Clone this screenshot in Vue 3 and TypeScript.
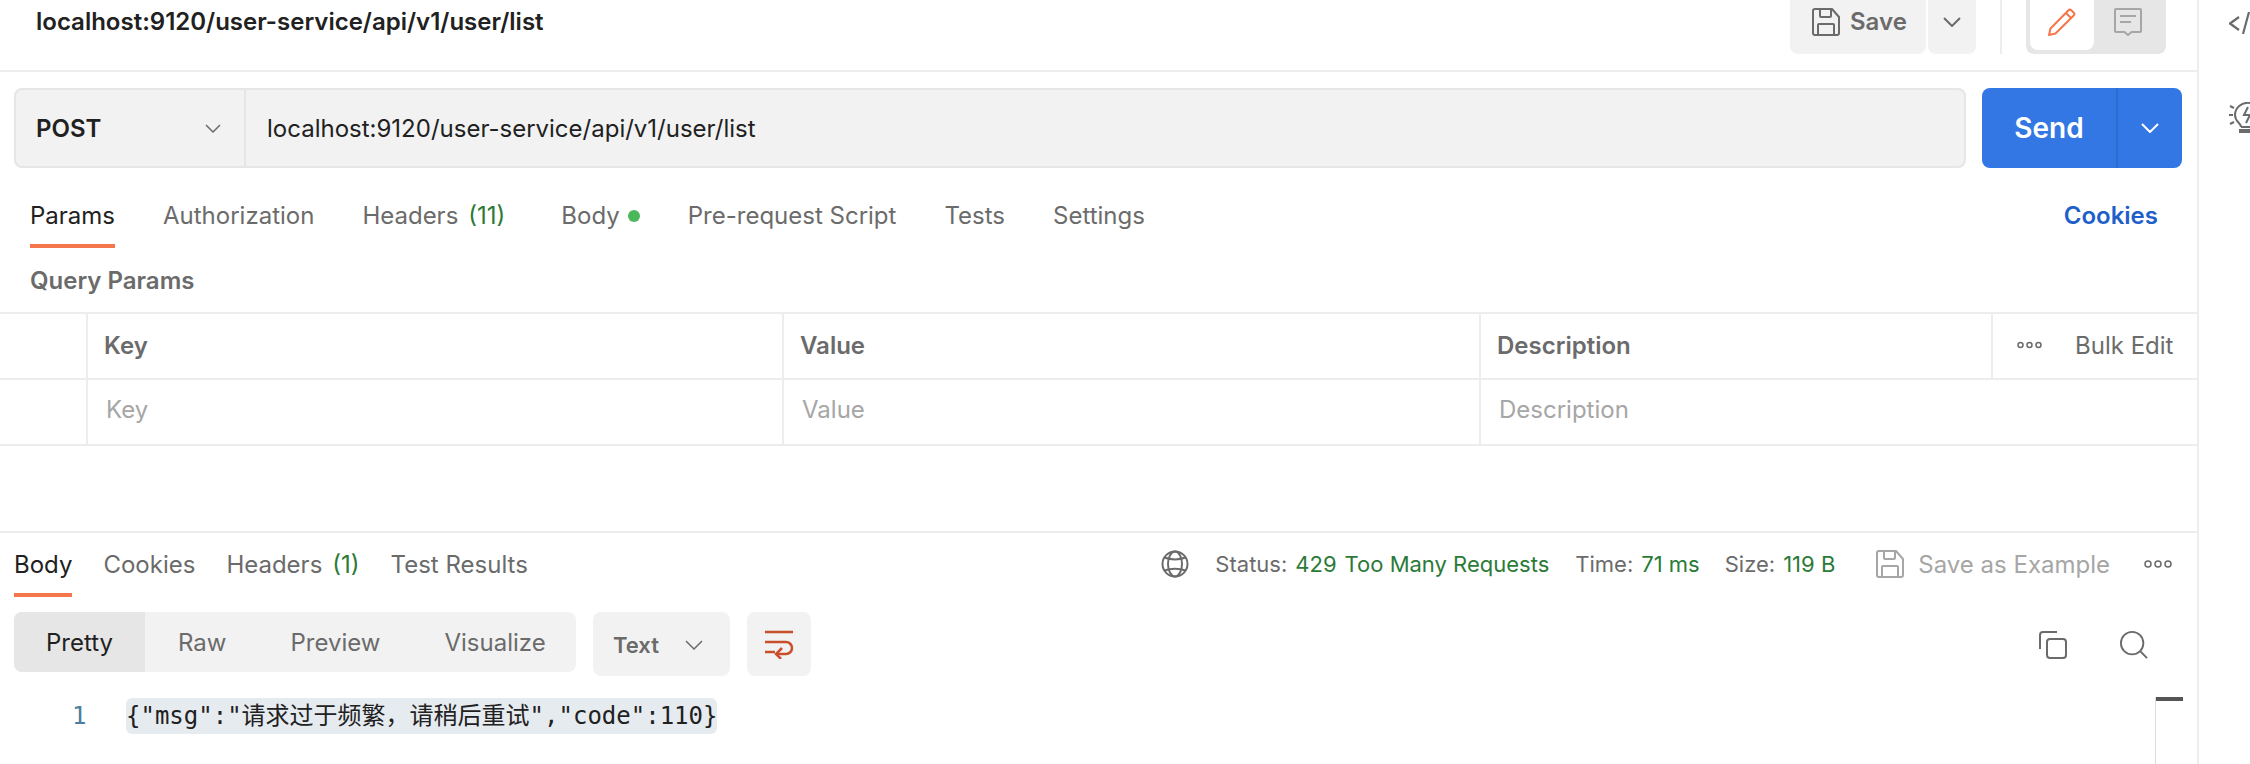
<script setup lang="ts">
const tabs: { label: string; count?: string; dot?: boolean; active?: boolean; cls: string }[] = [
  { label: 'Params', active: true, cls: 't-params' },
  { label: 'Authorization', cls: 't-auth' },
  { label: 'Headers', count: '(11)', cls: 't-head' },
  { label: 'Body', dot: true, cls: 't-body' },
  { label: 'Pre-request Script', cls: 't-pre' },
  { label: 'Tests', cls: 't-tests' },
  { label: 'Settings', cls: 't-set' },
]
const resTabs: { label: string; count?: string; active?: boolean }[] = [
  { label: 'Body', active: true },
  { label: 'Cookies' },
  { label: 'Headers', count: '(1)' },
  { label: 'Test Results' },
]
const views = ['Raw', 'Preview', 'Visualize']
</script>

<template>
  <div class="app">
    <main class="main">
      <header class="top">
        <h1 class="title">localhost:9120/user-service/api/v1/user/list</h1>
        <div class="save">
          <svg class="ic28" viewBox="0 0 28 28" fill="none" stroke="#6b6b6b" stroke-width="2">
            <path d="M1 3a2 2 0 0 1 2-2h17l7 8v16a2 2 0 0 1-2 2H3a2 2 0 0 1-2-2z" stroke-linejoin="round" />
            <path d="M8 1v7a1 1 0 0 0 1 1h9a1 1 0 0 0 1-1V1M6 27V17a1 1 0 0 1 1-1h14a1 1 0 0 1 1 1v10" />
          </svg>
          <span>Save</span>
        </div>
        <div class="save-more">
          <svg width="18" height="10" viewBox="0 0 18 10" fill="none" stroke="#6b6b6b" stroke-width="2"><path d="M1 1l8 8 8-8" /></svg>
        </div>
        <div class="vsep"></div>
        <div class="toggle">
          <div class="toggle-on">
            <svg class="ic28" viewBox="0 0 28 28" fill="none" stroke="#f4764a" stroke-width="2" stroke-linejoin="round">
              <path d="M1 27l1.500-6.500L20.500 2.300a2 2 0 0 1 2.800 0l2.400 2.400a2 2 0 0 1 0 2.800L7.500 25.500z" />
              <path d="M18 5l5 5" />
            </svg>
          </div>
          <div class="toggle-off">
            <svg class="ic28" viewBox="0 0 28 28" fill="none" stroke="#a6a6a6" stroke-width="2">
              <path d="M2 1h24a1 1 0 0 1 1 1v21a1 1 0 0 1-1 1h-8.500L14 27l-3.500-3H2a1 1 0 0 1-1-1V2a1 1 0 0 1 1-1z" stroke-linejoin="round" />
              <path d="M6 8h16M6 14h11" />
            </svg>
          </div>
        </div>
      </header>

      <section class="req">
        <div class="urlbox">
          <div class="method">
            <span>POST</span>
            <svg width="16" height="9" viewBox="0 0 16 9" fill="none" stroke="#6b6b6b" stroke-width="1.500"><path d="M1 1l7 7 7-7" /></svg>
          </div>
          <div class="url">localhost:9120/user-service/api/v1/user/list</div>
        </div>
        <div class="send">
          <span class="send-l">Send</span>
          <span class="send-r">
            <svg width="18" height="10" viewBox="0 0 18 10" fill="none" stroke="#fff" stroke-width="2"><path d="M1 1l8 8 8-8" /></svg>
          </span>
        </div>
      </section>

      <nav class="tabs">
        <div v-for="t in tabs" :key="t.label" class="tab" :class="[t.cls, { active: t.active }]">
          {{ t.label }}<span v-if="t.count" class="count">{{ t.count }}</span><i v-if="t.dot" class="dot"></i>
        </div>
        <div class="cookies">Cookies</div>
      </nav>

      <div class="qp">Query Params</div>

      <div class="table">
        <div class="cell"></div>
        <div class="cell th">Key</div>
        <div class="cell th">Value</div>
        <div class="cell th">Description</div>
        <div class="cell actions">
          <svg width="25" height="8" viewBox="0 0 25 8" fill="none" stroke="#6b6b6b" stroke-width="1.500"><circle cx="3.500" cy="4" r="2.500" /><circle cx="12.500" cy="4" r="2.500" /><circle cx="21.500" cy="4" r="2.500" /></svg>
          <span>Bulk Edit</span>
        </div>
        <div class="cell"></div>
        <div class="cell ph">Key</div>
        <div class="cell ph">Value</div>
        <div class="cell ph wide">Description</div>
      </div>

      <section class="res">
        <div class="res-top">
          <div class="res-tabs">
            <div v-for="t in resTabs" :key="t.label" class="rtab" :class="{ active: t.active }">
              {{ t.label }}<span v-if="t.count" class="count">{{ t.count }}</span>
            </div>
          </div>
          <div class="status">
            <svg width="28" height="28" viewBox="0 0 28 28" fill="none" stroke="#6b6b6b" stroke-width="2">
              <circle cx="14" cy="14" r="12.500" />
              <ellipse cx="14" cy="14" rx="7" ry="12.500" />
              <path d="M3.500 7.500c6 2.500 15 2.500 21 0M3.500 20.500c6-2.500 15-2.500 21 0" />
            </svg>
            <span class="st st-a">Status:<b>429</b><b class="tmr">Too Many Requests</b></span>
            <span class="st st-b">Time:<b>71 ms</b></span>
            <span class="st st-c">Size:<b>119 B</b></span>
            <svg class="ic28 st-save" viewBox="0 0 28 28" fill="none" stroke="#a6a6a6" stroke-width="2">
              <path d="M1 3a2 2 0 0 1 2-2h17l7 8v16a2 2 0 0 1-2 2H3a2 2 0 0 1-2-2z" stroke-linejoin="round" />
              <path d="M8 1v7a1 1 0 0 0 1 1h9a1 1 0 0 0 1-1V1M6 27V17a1 1 0 0 1 1-1h14a1 1 0 0 1 1 1v10" />
            </svg>
            <span class="st-ex">Save as Example</span>
            <svg class="st-dots" width="28" height="8" viewBox="0 0 28 8" fill="none" stroke="#6b6b6b" stroke-width="1.500"><circle cx="4" cy="4" r="3" /><circle cx="14" cy="4" r="3" /><circle cx="24" cy="4" r="3" /></svg>
          </div>
        </div>

        <div class="toolbar">
          <div class="views">
            <div class="view on">Pretty</div>
            <div v-for="v in views" :key="v" class="view" :class="'v-' + v">{{ v }}</div>
          </div>
          <div class="fmt">
            <span>Text</span>
            <svg width="18" height="10" viewBox="0 0 18 10" fill="none" stroke="#6b6b6b" stroke-width="1.500"><path d="M1 1l8 8 8-8" /></svg>
          </div>
          <div class="wrap">
            <svg width="30" height="30" viewBox="0 0 30 30" fill="none" stroke="#c94f2c" stroke-width="2.500">
              <path d="M1 3h28M1 13h21a5.500 5.500 0 0 1 0 12h-9M1 23h10" />
              <path d="M18 19l-6 6 5 5" />
            </svg>
          </div>
          <div class="tools">
            <svg class="ic28" viewBox="0 0 28 28" fill="none" stroke="#6b6b6b" stroke-width="2">
              <path d="M18 1H4a3 3 0 0 0-3 3v14" />
              <rect x="8" y="8" width="19" height="19" rx="3" />
            </svg>
            <svg class="ic28" viewBox="0 0 30 30" fill="none" stroke="#6b6b6b" stroke-width="2">
              <circle cx="13" cy="13" r="12" />
              <path d="M22 22l7 7" />
            </svg>
          </div>
        </div>

        <div class="code">
          <span class="ln">1</span>
          <span class="hl">{"msg":"请求过于频繁，请稍后重试","code":110}</span>
        </div>
        <div class="scroll"><i></i></div>
      </section>
    </main>

    <aside class="rail">
      <svg width="21" height="22" viewBox="0 0 21 22" fill="none" stroke="#6b6b6b" stroke-width="2.200">
        <path d="M10 5L1 11.500 10 18M20 0l-6 22" />
      </svg>
      <svg class="bulb" width="21" height="31" viewBox="0 0 21 31" fill="none" stroke="#6b6b6b" stroke-width="2">
        <path d="M12 25c0-4-6-5-6-12A13 12 0 0 1 21 1" />
        <path d="M12 25h9" />
        <path d="M19 5l-4 8h6l-4 8" />
        <path d="M1 4l4 2M0 13h4M1 22l4-2" />
        <path d="M10 29h11" stroke-width="4" />
      </svg>
    </aside>
  </div>
</template>

<style>
html, body { margin: 0; background: #fff; }
</style>

<style scoped>
.app {
  width: 2250px;
  height: 764px;
  overflow: hidden;
  display: flex;
  font-family: Inter, "Noto Sans", sans-serif;
  color: #6b6b6b;
  background: #fff;
}
.main {
  width: 2199px;
  flex: none;
  box-sizing: border-box;
  border-right: 2px solid #ededed;
}
.ic28 { width: 28px; height: 28px; flex: none; }

.top {
  height: 72px;
  box-sizing: border-box;
  border-bottom: 2px solid #ededed;
  display: flex;
  align-items: flex-start;
  padding-right: 31px;
}
.title {
  margin: 0 auto 0 36px;
  font-size: 24px;
  line-height: 44px;
  font-weight: 600;
  color: #212121;
}
.save {
  width: 136px;
  height: 54px;
  box-sizing: border-box;
  padding: 8px 0 0 22px;
  display: flex;
  gap: 10px;
  background: #f2f2f2;
  border-radius: 0 0 8px 8px;
  font-size: 24px;
  font-weight: 600;
  line-height: 28px;
}
.save-more {
  width: 48px;
  height: 54px;
  margin-left: 2px;
  background: #f2f2f2;
  border-radius: 0 0 8px 8px;
  display: flex;
  justify-content: center;
  padding-top: 17px;
  box-sizing: border-box;
}
.vsep { width: 2px; height: 54px; margin: 0 24px; background: #ededed; }
.toggle {
  width: 140px;
  height: 54px;
  box-sizing: border-box;
  padding: 0 4px 4px;
  background: #e6e6e6;
  border-radius: 0 0 8px 8px;
  display: flex;
}
.toggle-on {
  width: 64px;
  background: #fff;
  border-radius: 0 0 8px 8px;
  padding: 8px 0 0 18px;
  box-sizing: border-box;
}
.toggle-off { padding: 8px 0 0 20px; }

.req { display: flex; gap: 16px; padding: 16px 15px 0 14px; }
.urlbox {
  flex: 1;
  height: 80px;
  box-sizing: border-box;
  border: 2px solid #e6e6e6;
  border-radius: 8px;
  background: #f2f2f2;
  display: flex;
  align-items: center;
}
.method {
  width: 230px;
  height: 100%;
  flex: none;
  box-sizing: border-box;
  border-right: 2px solid #e6e6e6;
  padding: 0 23px 0 20px;
  display: flex;
  align-items: center;
  justify-content: space-between;
  font-size: 24px;
  font-weight: 600;
  color: #212121;
}
.url { padding-left: 21px; font-size: 24px; color: #212121; }
.send {
  width: 200px;
  height: 80px;
  background: #3377e4;
  border-radius: 8px;
  display: flex;
  color: #fff;
}
.send-l {
  width: 134px;
  border-right: 2px solid #2c6bcf;
  display: flex;
  align-items: center;
  justify-content: center;
  font-size: 28px;
  font-weight: 600;
}
.send-r { flex: 1; display: flex; align-items: center; justify-content: center; }

.tabs {
  height: 80px;
  box-sizing: border-box;
  padding: 0 39px 0 30px;
  display: flex;
  font-size: 24px;
}
.tab {
  height: 80px;
  box-sizing: border-box;
  padding-top: 30px;
  line-height: 36px;
  white-space: nowrap;
}
.tab.active { color: #212121; border-bottom: 4px solid #f4764a; }
.t-params { margin-right: 48px; }
.t-auth { margin-right: 48px; }
.t-head { margin-right: 56px; }
.t-body { margin-right: 48px; }
.t-pre { margin-right: 48px; }
.t-tests { margin-right: 48px; }
.count { color: #2b7a37; margin-left: 10px; }
.dot {
  display: inline-block;
  width: 12px;
  height: 12px;
  margin-left: 8px;
  border-radius: 50%;
  background: #4ab85a;
  vertical-align: 2px;
}
.cookies {
  margin-left: auto;
  padding-top: 30px;
  line-height: 36px;
  font-weight: 600;
  color: #1f5fc9;
}
.qp {
  height: 64px;
  box-sizing: border-box;
  padding: 15px 0 0 30px;
  font-size: 24px;
  line-height: 36px;
  font-weight: 600;
}

.table {
  display: grid;
  grid-template-columns: 88px 696px 697px 512px 1fr;
  grid-auto-rows: 66px;
  border-top: 2px solid #ededed;
}
.cell {
  box-sizing: border-box;
  border-right: 2px solid #ededed;
  border-bottom: 2px solid #ededed;
  padding-left: 16px;
  display: flex;
  align-items: center;
  font-size: 24px;
}
.cell:nth-child(5) { border-right: 0; }
.th { font-weight: 600; padding-bottom: 2px; }
.ph { color: #a6a6a6; padding-left: 18px; padding-bottom: 6px; }
.wide { grid-column: span 2; border-right: 0; }
.actions {
  padding-left: 24px;
  gap: 33px;
  padding-bottom: 2px;
  color: #6b6b6b;
}

.res { position: relative; margin-top: 85px; border-top: 2px solid #ededed; }
.res-top { height: 64px; display: flex; padding-right: 25px; }
.res-tabs { display: flex; padding-left: 14px; gap: 31px; font-size: 24px; }
.rtab {
  height: 64px;
  box-sizing: border-box;
  padding-top: 14px;
  line-height: 36px;
  white-space: nowrap;
}
.rtab.active { color: #212121; border-bottom: 4px solid #f4764a; }
.status {
  margin-left: auto;
  display: flex;
  align-items: center;
  height: 62px;
  font-size: 22px;
}
.st { white-space: nowrap; margin-left: 26px; }
.st-c { margin-left: 25px; }
.st b { font-weight: 400; color: #2b7a37; margin-left: 8px; }
.st b.tmr { margin-left: 8px; }
.st-save { margin-left: 41px; }
.st-ex { margin-left: 14px; color: #a6a6a6; font-size: 24px; }
.st-dots { margin-left: 34px; }

.toolbar {
  display: flex;
  align-items: flex-start;
  padding: 15px 15px 0 14px;
}
.views {
  width: 562px;
  height: 60px;
  display: flex;
  background: #f2f2f2;
  border-radius: 8px;
  overflow: hidden;
  font-size: 24px;
  line-height: 62px;
}
.view { padding: 0 32px; }
.view.on { width: 132px; box-sizing: border-box; background: #e6e6e6; color: #212121; }
.v-Raw { padding: 0 32px 0 33px; }
.fmt {
  width: 137px;
  height: 64px;
  box-sizing: border-box;
  margin-left: 17px;
  padding: 2px 27px 0 20px;
  background: #f2f2f2;
  border-radius: 8px;
  display: flex;
  align-items: center;
  justify-content: space-between;
  font-size: 22px;
  font-weight: 600;
}
.wrap {
  width: 64px;
  height: 64px;
  margin-left: 17px;
  background: #f2f2f2;
  border-radius: 8px;
  display: flex;
  align-items: center;
  justify-content: center;
}
.tools {
  margin-left: auto;
  display: flex;
  align-items: center;
  gap: 53px;
  height: 66px;
  padding-right: 34px;
}
.code {
  display: flex;
  align-items: center;
  margin-top: 20px;
  height: 36px;
  font-family: "DejaVu Sans Mono", "Noto Sans CJK SC", monospace;
  font-size: 24px;
}
.ln { width: 126px; box-sizing: border-box; padding-left: 72px; color: #4a7d9e; }
.hl { background: #e6ebf0; border-radius: 6px; color: #212121; line-height: 36px; white-space: nowrap; }
.scroll {
  position: absolute;
  left: 2155px;
  top: 164px;
  bottom: -40px;
  width: 27px;
  border-left: 1px solid #dcdcdc;
}
.scroll i { display: block; height: 4px; background: #555; }

.rail {
  flex: 1;
  padding: 12px 0 0 30px;
  display: flex;
  flex-direction: column;
  gap: 68px;
}
.rail svg { flex: none; }
</style>
